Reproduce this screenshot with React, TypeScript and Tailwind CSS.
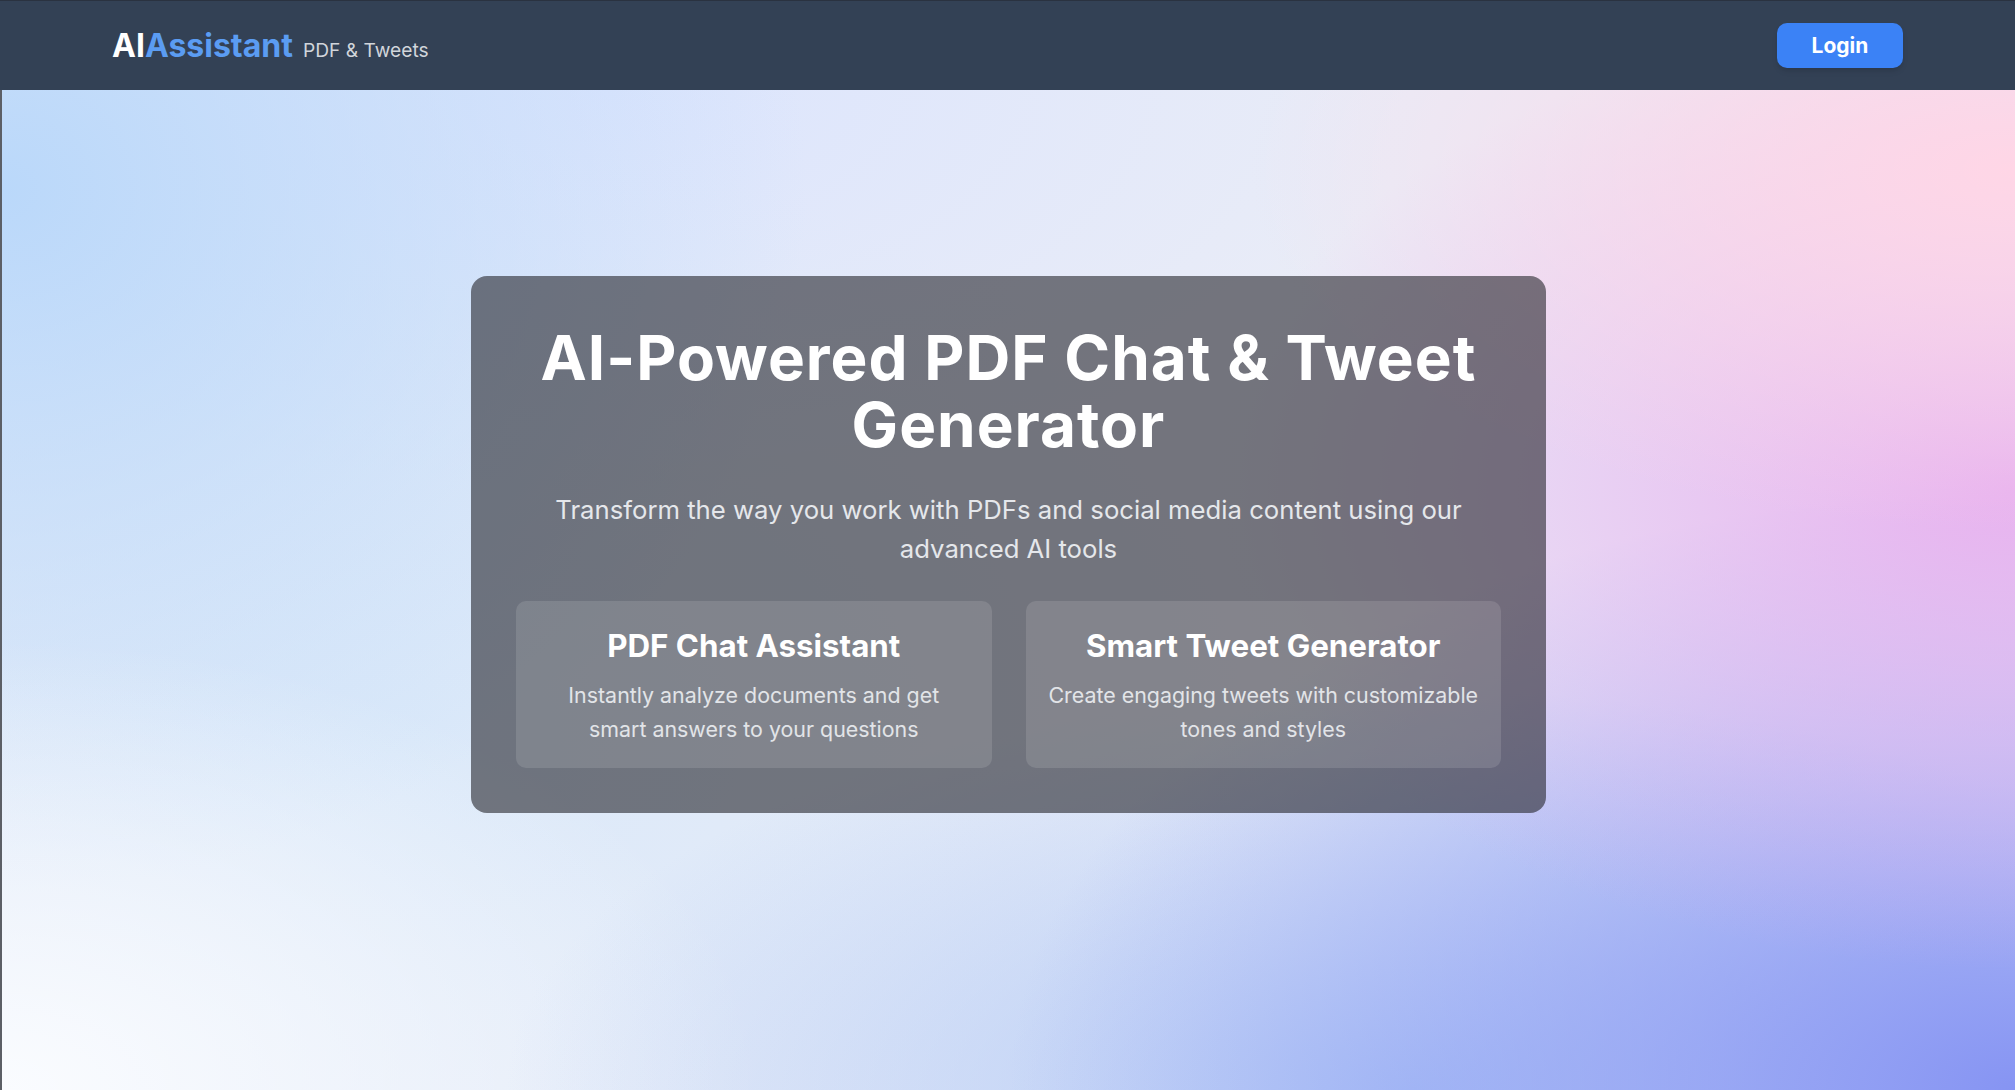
import React from "react";

const features = [
    {
        title: "PDF Chat Assistant",
        lines: ["Instantly analyze documents and get", "smart answers to your questions"],
    },
    {
        title: "Smart Tweet Generator",
        lines: ["Create engaging tweets with customizable", "tones and styles"],
    },
];

export default function App() {
    return (
        <div className="min-h-screen font-['Inter','Noto_Sans',sans-serif]">
            {/* top bar */}
            <header className="h-[90px] bg-[#334155] border-t border-[#2a3240] shadow-md flex items-center justify-between px-[112px]">
                <div className="flex items-baseline gap-[10px]">
                    <span className="text-[32px] font-bold leading-none">
                        <span className="text-white">AI</span>
                        <span className="text-[#5b9cf2]">Assistant</span>
                    </span>
                    <span className="text-[19.2px] text-[#d1d5db] leading-none">PDF &amp; Tweets</span>
                </div>
                <button className="h-[45px] w-[126px] rounded-[10px] bg-[#3b82f6] text-white text-[21px] font-bold shadow-md">
                    Login
                </button>
            </header>

            <main className="min-h-[1000px] border-l-2 border-[#5c5f66] flex justify-center pt-[186px] bg-[#e9ecf7] bg-[radial-gradient(ellipse_38%_36%_at_100%_8%,rgba(255,214,230,1),transparent),radial-gradient(ellipse_40%_48%_at_100%_40%,rgba(232,172,238,0.9),transparent),radial-gradient(ellipse_50%_60%_at_100%_100%,rgba(134,148,243,1),transparent),radial-gradient(ellipse_45%_40%_at_70%_100%,rgba(176,200,246,0.95),transparent),radial-gradient(ellipse_38%_45%_at_0%_100%,rgba(250,252,255,1),transparent),radial-gradient(ellipse_40%_70%_at_0%_10%,rgba(186,216,250,1),transparent),radial-gradient(ellipse_45%_60%_at_20%_65%,rgba(215,232,250,0.8),transparent),radial-gradient(ellipse_40%_40%_at_30%_0%,rgba(220,229,253,1),transparent)]">
                <section className="w-[1075px] h-[537px] rounded-[16px] bg-[#24252b]/60 px-[45px] pt-[48px] text-center">
                    <h1 className="text-[62px] leading-[67px] font-bold text-white tracking-[1px]">
                        AI-Powered PDF Chat &amp; Tweet Generator
                    </h1>
                    <p className="mt-[32px] mx-auto max-w-[930px] text-[25.7px] leading-[39px] text-[#e5e7eb]">
                        Transform the way you work with PDFs and social media content using our advanced AI tools
                    </p>
                    <div className="mt-[33px] grid grid-cols-2 gap-[34px]">
                        {features.map((f) => (
                            <div key={f.title} className="h-[167px] rounded-[10px] bg-white/[0.12] px-[16px] pt-[27px]">
                                <h2 className="text-[31.3px] leading-[36px] font-bold text-white">{f.title}</h2>
                                <p className="mt-[15px] text-[21.4px] leading-[33.5px] text-[#e2e4e8]">
                                    {f.lines.map((l) => (
                                        <span key={l} className="block">{l}</span>
                                    ))}
                                </p>
                            </div>
                        ))}
                    </div>
                </section>
            </main>
        </div>
    );
}
